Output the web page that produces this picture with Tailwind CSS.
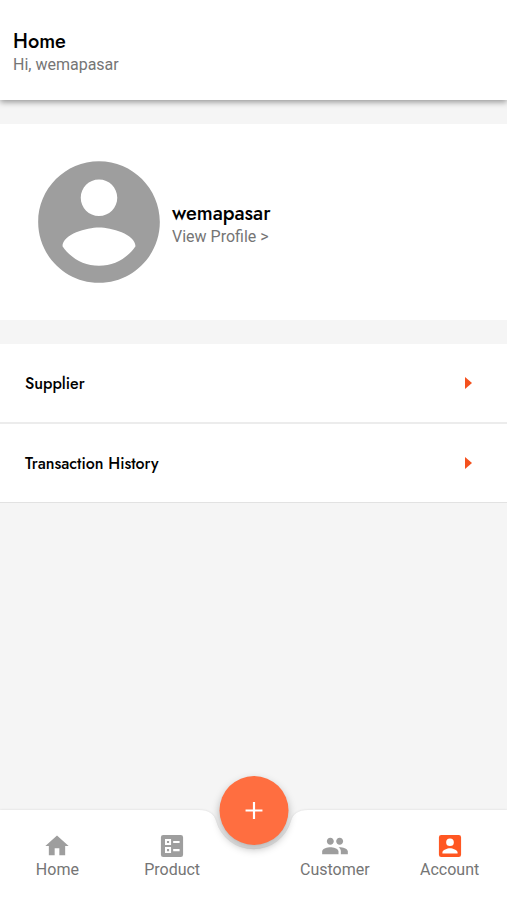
<!DOCTYPE html>
<html lang="en">
<head>
<meta charset="utf-8">
<meta name="viewport" content="width=device-width, initial-scale=1">
<title>Account</title>
<script src="https://cdn.jsdelivr.net/npm/@tailwindcss/browser@4"></script>
</head>
<body class="flex min-h-screen flex-col bg-[#f5f5f5] font-['Roboto',sans-serif] text-base leading-6 text-[#757575]">
  <header class="bg-white px-[13px] pt-[30px] pb-6 shadow-[0_2px_6px_rgba(0,0,0,0.4)]">
    <h1 class="font-['Jost','Lato',sans-serif] text-xl leading-6 font-medium text-black">Home</h1>
    <p class="leading-[22px]">Hi, wemapasar</p>
  </header>

  <main class="flex flex-1 flex-col gap-6 pt-6">
    <section class="flex items-center bg-white px-[26px] py-[25px]">
      <svg class="size-[146px] shrink-0" viewBox="0 0 24 24" fill="#9e9e9e" aria-hidden="true"><path d="M12 2C6.48 2 2 6.48 2 12s4.48 10 10 10 10-4.48 10-10S17.52 2 12 2zm0 3c1.66 0 3 1.34 3 3s-1.34 3-3 3-3-1.34-3-3 1.34-3 3-3zm0 14.2c-2.5 0-4.71-1.28-6-3.22.03-1.99 4-3.08 6-3.08 1.99 0 5.97 1.09 6 3.08-1.29 1.94-3.5 3.22-6 3.22z"/></svg>
      <div class="pt-1.5">
        <h2 class="font-['Jost','Lato',sans-serif] text-xl leading-6 font-medium text-black">wemapasar</h2>
        <a href="#profile" class="block leading-[22px]">View Profile &gt;</a>
      </div>
    </section>

    <ul class="font-['Jost','Lato',sans-serif] font-medium text-black">
      <li class="border-b-2 border-[#ececec] bg-white">
        <a href="#supplier" class="flex h-[78px] items-center justify-between pr-[35px] pl-[25px]"><span class="pt-0.5">Supplier</span>
          <svg class="h-3 w-[7px]" viewBox="0 0 7 12" fill="#f4511e" aria-hidden="true"><path d="M0 0l7 6-7 6z"/></svg>
        </a>
      </li>
      <li class="border-b border-[#e2e2e2] bg-white">
        <a href="#history" class="flex h-[78px] items-center justify-between pr-[35px] pl-[25px]"><span class="pt-0.5">Transaction History</span>
          <svg class="h-3 w-[7px]" viewBox="0 0 7 12" fill="#f4511e" aria-hidden="true"><path d="M0 0l7 6-7 6z"/></svg>
        </a>
      </li>
    </ul>
  </main>

  <nav class="relative" aria-label="Main">
    <div class="absolute inset-0 flex drop-shadow-[0_0_1px_rgba(0,0,0,0.12)]" aria-hidden="true">
      <div class="flex-1 bg-white"></div>
      <svg class="h-full w-[109px] shrink-0" viewBox="0 0 109 90" preserveAspectRatio="none" fill="#fff"><path d="M0 0C10 0 15 4 17 11A39 39 0 0 0 92 11C94 4 99 0 109 0V90H0Z"/></svg>
      <div class="flex-1 bg-white"></div>
    </div>
    <button type="button" aria-label="Add" class="absolute -top-[34px] left-1/2 flex size-[69px] -translate-x-1/2 items-center justify-center rounded-full bg-[#ff6e40] shadow-[0_4px_8px_rgba(0,0,0,0.28)]">
      <svg class="size-[29px]" viewBox="0 0 24 24" fill="#fff" aria-hidden="true"><path d="M19 12.9h-6.1V19h-1.8v-6.1H5v-1.8h6.1V5h1.8v6.1H19z"/></svg>
    </button>
    <div class="pointer-events-none relative grid h-[90px] grid-cols-[1fr_1fr_48px_1fr_1fr]">
      <a href="#home" class="pointer-events-auto flex flex-col items-center pt-[22px]">
        <svg class="size-7" viewBox="0 0 24 24" fill="#9e9e9e" aria-hidden="true"><path d="M10 20v-6h4v6h5v-8h3L12 3 2 12h3v8z"/></svg>
        <span class="leading-5">Home</span>
      </a>
      <a href="#product" class="pointer-events-auto flex flex-col items-center pt-[22px]">
        <svg class="size-7" viewBox="0 0 24 24" fill="#9e9e9e" aria-hidden="true"><path fill-rule="evenodd" d="M4.500 2.500h15a2 2 0 0 1 2 2v15a2 2 0 0 1-2 2h-15a2 2 0 0 1-2-2v-15a2 2 0 0 1 2-2zM6 6v5.200h5.200V6zM7.700 7.700h1.800v1.800H7.700zM6 12.900v5.200h5.200v-5.200zM7.700 14.600h1.800v1.800H7.700zM13 7.700v1.800h5.500V7.700zM13 14.600v1.800h5.500v-1.800z"/></svg>
        <span class="leading-5">Product</span>
      </a>
      <a href="#customer" class="pointer-events-auto col-start-4 flex flex-col items-center pt-[22px]">
        <svg class="size-7" viewBox="0 0 24 24" fill="#9e9e9e" aria-hidden="true"><path d="M16 11c1.660 0 2.990-1.340 2.990-3S17.660 5 16 5s-3 1.340-3 3 1.340 3 3 3zm-8 0c1.660 0 2.990-1.340 2.990-3S9.660 5 8 5 5 6.340 5 8s1.340 3 3 3zm0 2c-2.330 0-7 1.170-7 3.500V19h14v-2.500c0-2.330-4.670-3.500-7-3.500zm8 0c-.29 0-.62.020-.97.050 1.160.840 1.970 1.970 1.970 3.450V19h6v-2.500c0-2.330-4.670-3.500-7-3.500z"/></svg>
        <span class="leading-5">Customer</span>
      </a>
      <a href="#account" aria-current="page" class="pointer-events-auto flex flex-col items-center pt-[22px]">
        <svg class="size-7" viewBox="0 0 24 24" fill="#ff5722" aria-hidden="true"><path d="M4.500 2.500h15a2 2 0 0 1 2 2v15a2 2 0 0 1-2 2h-15a2 2 0 0 1-2-2v-15a2 2 0 0 1 2-2zM12 5.500a3.300 3.300 0 1 0 0 6.600 3.300 3.300 0 0 0 0-6.600zM5.500 18.500h13v-.9c0-2.200-4.300-3.600-6.500-3.600s-6.500 1.400-6.500 3.600z" fill-rule="evenodd"/></svg>
        <span class="leading-5">Account</span>
      </a>
    </div>
  </nav>
</body>
</html>
